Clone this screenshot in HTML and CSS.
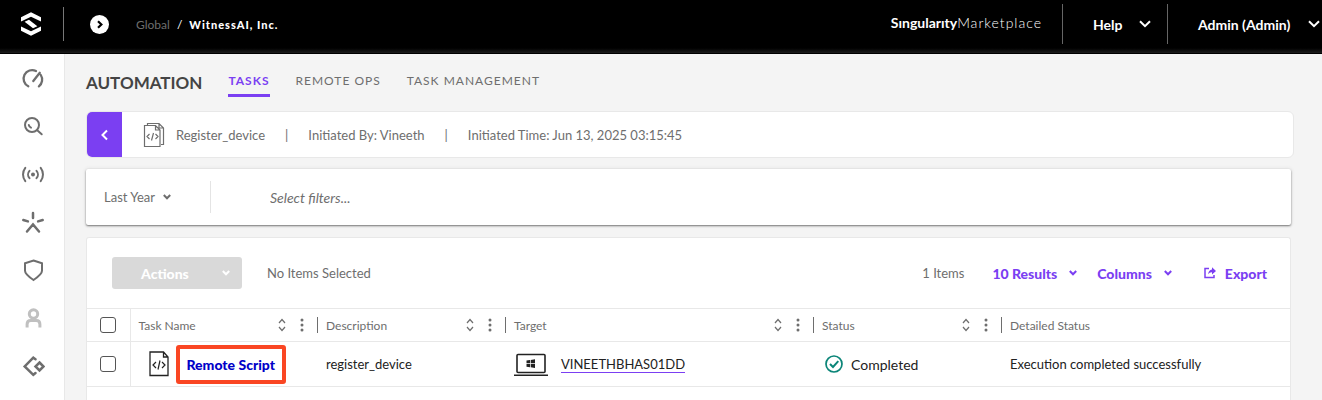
FILE: index.html
```html
<!DOCTYPE html>
<html lang="en">
<head>
  <meta charset="UTF-8">
  <meta name="viewport" content="width=device-width, initial-scale=1.0">
  <title>Automation - Tasks</title>
  <link rel="stylesheet" href="styles.css">
</head>
<body>

  <!-- Top bar -->
  <header class="topbar">
    <a class="logo" href="#" aria-label="Home">
      <svg width="20" height="24" viewBox="0 0 20 24" fill="#fff">
        <path d="M0 5.200 10 .3 20 5.200V9.500L10 4.700 0 9.500z"/>
        <path d="M0 14.500 10 19.300 20 14.500v4.300L10 23.700 0 18.800z"/>
        <path d="M3.600 9.800 8 7.700 16.400 14.200 12 16.300z"/>
      </svg>
    </a>
    <button class="scope" aria-label="Open scope">
      <svg width="19" height="19" viewBox="0 0 19 19"><circle cx="9.500" cy="9.500" r="9.500" fill="#fff"/><path d="M8 6.200l3.400 3.300L8 12.800" fill="none" stroke="#000" stroke-width="2.200"/></svg>
    </button>
    <nav class="crumbs">
      <a href="#">Global</a><span>/</span><strong>WitnessAI, Inc.</strong>
    </nav>
    <a class="market" href="#"><b>Sıngularıty</b><span>Marketplace</span></a>
    <button class="top-menu help">Help
      <svg width="12" height="8" viewBox="0 0 12 8"><path d="M1 1.200l5 5 5-5"/></svg>
    </button>
    <button class="top-menu admin">Admin (Admin)
      <svg width="12" height="8" viewBox="0 0 12 8"><path d="M1 1.200l5 5 5-5"/></svg>
    </button>
  </header>

  <div class="layout">
    <!-- Side navigation -->
    <nav class="sidebar">
      <a href="#" aria-label="Dashboard">
        <svg width="24" height="24" viewBox="0 0 24 24"><path d="M7.300 20.300A8.500 8.500 0 0 1 15 5M19.800 9a8.500 8.500 0 0 1-1.900 11.300M12.300 15l6.500-8.200" stroke-width="2.300"/></svg>
      </a>
      <a href="#" aria-label="Search">
        <svg width="24" height="24" viewBox="0 0 24 24"><circle cx="11" cy="11" r="7"/><path d="M16.200 16.300l4.500 4M7.800 11q.5 2 2.200 2.700"/></svg>
      </a>
      <a href="#" aria-label="Sentinels">
        <svg width="24" height="24" viewBox="0 0 24 24"><circle cx="12" cy="12.500" r="1" fill="#6e6e6e"/><path d="M8.500 8.800a5.500 5.500 0 0 0 0 7.400M15.500 8.800a5.500 5.500 0 0 1 0 7.400M4.300 5.800a11 11 0 0 0 0 13.400M19.700 5.800a11 11 0 0 1 0 13.400"/></svg>
      </a>
      <a href="#" aria-label="Incidents">
        <svg class="mid" width="24" height="24" viewBox="0 0 24 24"><path d="M12 3v5M2.300 10l4.600 1.400M21.700 10l-4.600 1.400M6 21.500l6-7 6 7"/></svg>
      </a>
      <a href="#" aria-label="Policies">
        <svg width="24" height="24" viewBox="0 0 24 24"><path d="M12.500 2.500l8.500 2.700v7.600c0 3.500-4 6.200-8.500 9.200-4.500-3-8.500-5.700-8.500-9.200V5.200z"/></svg>
      </a>
      <a class="off" href="#" aria-label="Users">
        <svg width="24" height="24" viewBox="0 0 24 24"><circle cx="12.500" cy="8" r="4.200"/><path d="M6.100 21.500v-3.300q0-3.700 3.700-3.700h5.400q3.700 0 3.700 3.700v3.300"/></svg>
      </a>
      <a href="#" aria-label="Integrations">
        <svg class="mid" width="24" height="24" viewBox="0 0 24 24"><path d="M14.500 5.200L12.300 3.700 3.700 12.500l8.600 8.300 2.200-1.800M18.500 8.500l4 4-4 4-4-4z"/></svg>
      </a>
    </nav>

    <main>
      <div class="page-head">
        <h1>AUTOMATION</h1>
        <nav class="tabs">
          <a class="active" href="#">TASKS</a>
          <a href="#">REMOTE OPS</a>
          <a href="#">TASK MANAGEMENT</a>
        </nav>
      </div>

      <!-- Task summary -->
      <section class="summary">
        <button class="back" aria-label="Back">
          <svg width="8" height="12" viewBox="0 0 8 12"><path d="M6 1.500L1.500 6 6 10.500"/></svg>
        </button>
        <svg class="doc" width="22" height="26" viewBox="0 0 22 26"><path d="M4.500 3V1.500H16L20.500 6v16.500H18M1.500 3.500h11l4.500 4.500v16.500H1.500zM12.500 3.500V8H17M16 1.500V6h4.500M6.500 12L4 14.500 6.500 17M12.500 12l2.500 2.500-2.500 2.500M10.500 11l-2 7.500"/></svg>
        <span>Register_device</span>
        <span class="bar">|</span>
        <span>Initiated By: Vineeth</span>
        <span class="bar">|</span>
        <span>Initiated Time: Jun 13, 2025 03:15:45</span>
      </section>

      <!-- Filters -->
      <section class="filters">
        <button class="period">Last Year
          <svg class="chev" width="8" height="6" viewBox="0 0 8 6"><path d="M.8 1L4 4.300 7.200 1"/></svg>
        </button>
        <input type="text" aria-label="Select filters" placeholder="Select filters...">
      </section>

      <!-- Task list -->
      <section class="panel">
        <div class="toolbar">
          <button class="actions" disabled>Actions
            <svg class="chev" width="8" height="6" viewBox="0 0 8 6"><path d="M.8 1L4 4.300 7.200 1"/></svg>
          </button>
          <span class="selected">No Items Selected</span>
          <span class="count">1 Items</span>
          <button class="tool results">10 Results
            <svg class="chev" width="8" height="6" viewBox="0 0 8 6"><path d="M.8 1L4 4.300 7.200 1"/></svg>
          </button>
          <button class="tool columns">Columns
            <svg class="chev" width="8" height="6" viewBox="0 0 8 6"><path d="M.8 1L4 4.300 7.200 1"/></svg>
          </button>
          <button class="tool export">
            <svg width="12" height="12" viewBox="0 0 12 12"><path d="M5 1.500H1v9h9V8" fill="none" stroke="#7b3ff2" stroke-width="1.500"/><path d="M8 .3L12 4 8 7.500V5.200Q5.500 5 4.200 7.300 4.500 3 8 2.600z" fill="#7b3ff2"/></svg>
            Export
          </button>
        </div>

        <table>
          <colgroup>
            <col class="c-check"><col class="c-std"><col class="c-std"><col class="c-wide"><col class="c-std"><col>
          </colgroup>
          <thead>
            <tr>
              <th class="check"><input type="checkbox" aria-label="Select all"></th>
              <th><div class="th">Task Name
                <svg class="sort" width="28" height="14" viewBox="0 0 28 14"><path d="M1 5l3-3.500L7 5M1 9l3 3.500L7 9"/><circle cx="24" cy="2" r="1.500"/><circle cx="24" cy="7" r="1.500"/><circle cx="24" cy="12" r="1.500"/></svg></div></th>
              <th><div class="th">Description
                <svg class="sort" width="28" height="14" viewBox="0 0 28 14"><path d="M1 5l3-3.500L7 5M1 9l3 3.500L7 9"/><circle cx="24" cy="2" r="1.500"/><circle cx="24" cy="7" r="1.500"/><circle cx="24" cy="12" r="1.500"/></svg></div></th>
              <th><div class="th">Target
                <svg class="sort" width="28" height="14" viewBox="0 0 28 14"><path d="M1 5l3-3.500L7 5M1 9l3 3.500L7 9"/><circle cx="24" cy="2" r="1.500"/><circle cx="24" cy="7" r="1.500"/><circle cx="24" cy="12" r="1.500"/></svg></div></th>
              <th><div class="th">Status
                <svg class="sort" width="28" height="14" viewBox="0 0 28 14"><path d="M1 5l3-3.500L7 5M1 9l3 3.500L7 9"/><circle cx="24" cy="2" r="1.500"/><circle cx="24" cy="7" r="1.500"/><circle cx="24" cy="12" r="1.500"/></svg></div></th>
              <th><div class="th last">Detailed Status</div></th>
            </tr>
          </thead>
          <tbody>
            <tr>
              <td class="check"><input type="checkbox" aria-label="Select Remote Script"></td>
              <td>
                <div class="cell task">
                  <svg width="20" height="26" viewBox="0 0 20 26" fill="none" stroke="#222" stroke-width="1.300"><path d="M1 1h13.500L19 6v18.500H1zM14.500 1v5H19"/><path d="M7 11l-3 3 3 3M13 11l3 3-3 3M11 9.500L9 18.500" stroke-width="1.200"/></svg>
                  <a class="script" href="#">Remote Script</a>
                </div>
              </td>
              <td>register_device</td>
              <td>
                <div class="cell target">
                  <svg width="34" height="23" viewBox="0 0 34 23"><rect x="3" y="1.500" width="28" height="18" rx="1" fill="none" stroke="#222" stroke-width="1.600"/><path d="M0 22.200h34" stroke="#222" stroke-width="1.600"/><path d="M12.500 7.500l3.500-.5v3.300h-3.500zM16.700 6.900L21 6.300v4h-4.300zM12.500 10.900H16v3.300l-3.500-.5zM16.700 10.900H21v4l-4.300-.6z" fill="#222"/></svg>
                  <a href="#">VINEETHBHAS01DD</a>
                </div>
              </td>
              <td>
                <div class="cell status">
                  <svg width="18" height="18" viewBox="0 0 18 18" fill="none" stroke="#0b8578"><circle cx="9" cy="9" r="8" stroke-width="1.700"/><path d="M5 9l3 3 5.300-5.800" stroke-width="2"/></svg>
                  Completed
                </div>
              </td>
              <td>Execution completed successfully</td>
            </tr>
          </tbody>
        </table>
      </section>
    </main>
  </div>

</body>
</html>
```

FILE: styles.css
```css
* {
  box-sizing: border-box;
}
body {
  margin: 0;
  min-height: 100vh;
  display: flex;
  flex-direction: column;
  font-family: Lato, sans-serif;
  font-size: 13px;
  color: #6e6e6e;
  background: #f4f4f4;
}
a {
  color: inherit;
  text-decoration: none;
}
button {
  font: inherit;
  color: inherit;
  background: none;
  border: none;
  padding: 0;
  cursor: pointer;
}
svg {
  display: block;
  flex-shrink: 0;
}

/* Top bar */
.topbar {
  display: flex;
  align-items: center;
  height: 54px;
  padding-bottom: 6px;
  background: linear-gradient(#000 48px, #1c1c1c 53px, #000 53px);
  color: #fff;
}
.logo {
  display: flex;
  align-items: center;
  width: 64px;
  height: 34px;
  padding-left: 21px;
  border-right: 1px solid #777;
}
.scope {
  margin-left: 26px;
}
.crumbs {
  display: flex;
  align-items: center;
  gap: 7px;
  margin-left: 27px;
  font-size: 12px;
}
.crumbs a {
  color: #6e6e6e;
}
.crumbs strong {
  font-size: 11px;
  font-weight: 900;
  letter-spacing: 1px;
}
.market {
  margin-left: auto;
  margin-right: 20px;
  padding-bottom: 4px;
  font-size: 14px;
}
.market span {
  font-weight: 300;
  letter-spacing: 1px;
}
.top-menu {
  display: flex;
  align-items: center;
  justify-content: space-between;
  height: 40px;
  border-left: 1px solid #666;
  font-size: 14px;
  font-weight: bold;
}
.top-menu svg {
  fill: none;
  stroke: #fff;
  stroke-width: 2;
}
.help {
  width: 105px;
  padding: 0 16px 0 30px;
}
.admin {
  width: 155px;
  padding: 0 2px 0 30px;
}

/* Side navigation */
.layout {
  display: flex;
  flex: 1;
}
.sidebar {
  display: flex;
  flex-direction: column;
  gap: 24px;
  flex-shrink: 0;
  width: 65px;
  padding: 12px 0 0 21px;
  background: #fff;
  border-right: 1px solid #e8e8e8;
}
.sidebar svg {
  fill: none;
  stroke: #6e6e6e;
  stroke-width: 2;
  stroke-linecap: round;
}
.sidebar .mid {
  stroke-width: 2.5;
}
.sidebar .off svg {
  stroke: #c0c0c0;
  stroke-width: 3;
  stroke-linecap: butt;
}

main {
  display: flex;
  flex-direction: column;
  flex: 1;
  min-width: 0;
  padding: 16px 31px 0 21px;
}
.page-head {
  display: flex;
  gap: 26px;
  height: 27px;
}
h1 {
  margin: 0;
  font-size: 17px;
  line-height: 26px;
  color: #444;
}
.tabs {
  display: flex;
  gap: 26px;
  font-size: 12px;
  line-height: 22px;
  letter-spacing: 1px;
}
.tabs .active {
  color: #7b3ff2;
  font-weight: bold;
  border-bottom: 3px solid #7b3ff2;
}

/* Task summary */
.summary {
  display: flex;
  align-items: center;
  height: 47px;
  margin: 14px -3px 0 0;
  background: #fff;
  border: 1px solid #e8e8e8;
  border-radius: 6px;
  overflow: hidden;
}
.back {
  display: flex;
  align-items: center;
  justify-content: center;
  width: 35px;
  height: 100%;
  background: #7b3ff2;
}
.back svg {
  fill: none;
  stroke: #fff;
  stroke-width: 2;
}
.doc {
  margin: 0 11px 0 21px;
  fill: none;
  stroke: #6e6e6e;
  stroke-width: 1.2;
}
.bar {
  margin: 0 20px;
}

/* Filters */
.filters {
  display: flex;
  align-items: center;
  height: 56px;
  margin-top: 11px;
  background: #fff;
  border-radius: 2px;
  box-shadow: 0 1px 2px #777, 0 0 4px #ddd;
}
.period {
  display: flex;
  align-items: center;
  gap: 8px;
  width: 125px;
  height: 32px;
  padding-left: 18px;
  border-right: 1px solid #e4e4e4;
}
.chev {
  fill: none;
  stroke: currentColor;
  stroke-width: 2;
}
.filters input {
  flex: 1;
  margin-left: 59px;
  padding: 0;
  border: none;
  font: inherit;
  font-size: 14px;
  font-style: italic;
}
.filters input::placeholder {
  color: #6e6e6e;
}

/* Task list */
.panel {
  flex: 1;
  margin-top: 12px;
  background: #fff;
  border: 1px solid #e8e8e8;
  border-bottom: none;
  border-radius: 3px 3px 0 0;
}
.toolbar {
  display: flex;
  align-items: center;
  height: 70px;
  padding: 0 23px 0 25px;
}
.actions {
  display: flex;
  align-items: center;
  justify-content: space-between;
  width: 130px;
  height: 32px;
  padding: 0 12px 0 29px;
  background: #d9d9d9;
  border-radius: 3px;
  color: #fff;
  font-size: 14px;
  font-weight: 900;
}
.selected {
  margin-left: 25px;
}
.count {
  margin-left: auto;
}
.tool {
  display: flex;
  align-items: center;
  gap: 12px;
  color: #7b3ff2;
  font-size: 14px;
  font-weight: 900;
}
.results {
  margin-left: 28px;
}
.columns {
  margin-left: 20px;
}
.export {
  gap: 9px;
  margin-left: 32px;
}

table {
  width: 100%;
  table-layout: fixed;
  border-collapse: collapse;
  color: #222;
}
.c-check {
  width: 43px;
}
.c-std {
  width: 188px;
}
.c-wide {
  width: 308px;
}
th, td {
  padding: 0 0 0 8px;
  border: solid #e8e8e8;
  border-width: 1px 0;
  text-align: left;
  white-space: nowrap;
}
th {
  height: 33px;
  color: #6e6e6e;
  font-size: 12px;
  font-weight: normal;
}
td {
  height: 45px;
}
.check {
  padding: 0 0 0 13px;
  border-right-width: 1px;
}
.check input {
  display: block;
  appearance: none;
  width: 16px;
  height: 16px;
  margin: 0;
  background: #fff;
  border: 1px solid #555;
  border-radius: 3px;
}
.th {
  display: flex;
  align-items: center;
  justify-content: space-between;
  height: 16px;
  padding-right: 11px;
  border-right: 1px solid #6e6e6e;
}
.th.last {
  border: none;
}
.sort {
  fill: #6e6e6e;
}
.sort path {
  fill: none;
  stroke: #6e6e6e;
  stroke-width: 1.2;
}
.cell {
  display: flex;
  align-items: center;
}
.task {
  gap: 7px;
  padding-left: 10px;
}
.script {
  padding: 0 7px;
  border: 4px solid #fa4623;
  border-radius: 3px;
  color: #0000c8;
  font-size: 14px;
  font-weight: 900;
  line-height: 31px;
}
.target {
  gap: 13px;
}
.target a {
  border-bottom: 1px solid #7b3ff2;
}
.status {
  gap: 8px;
  padding-left: 3px;
  font-size: 14px;
}
```
